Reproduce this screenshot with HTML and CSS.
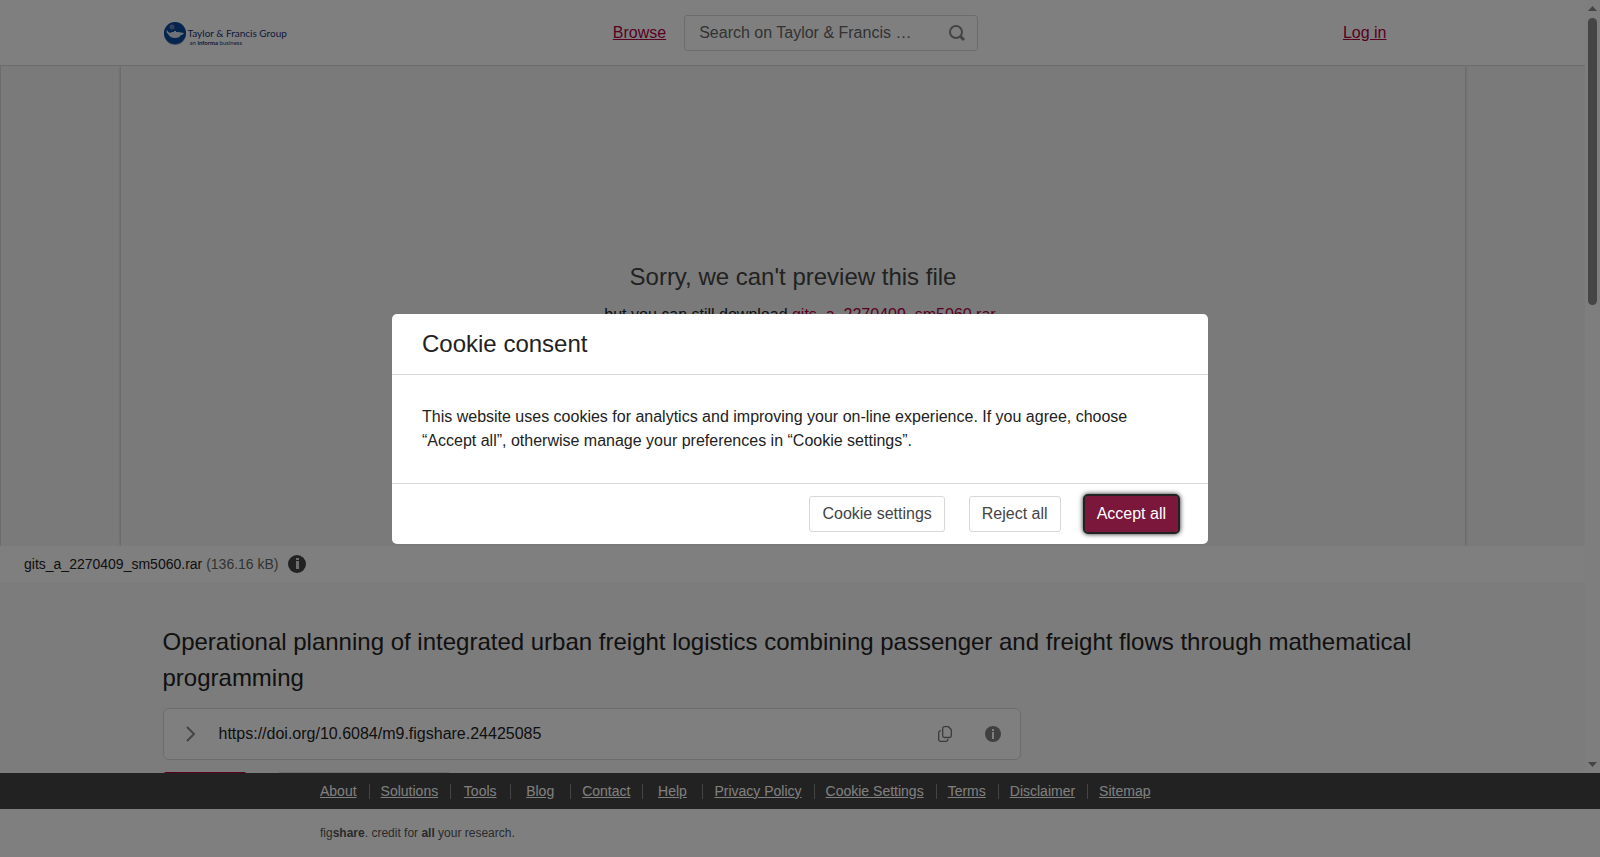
FILE: index.html
```html
<!DOCTYPE html>
<html lang="en">
<head>
  <meta charset="UTF-8">
  <meta name="viewport" content="width=device-width, initial-scale=1.0">
  <title>Operational planning of integrated urban freight logistics</title>
  <link rel="stylesheet" href="styles.css">
</head>
<body>
  <div class="viewport">
    <div class="page">
      <header class="site-header">
        <div class="container header-row">
          <a class="logo" href="#">
            <svg width="24" height="24" viewBox="0 0 24 24" aria-hidden="true">
              <circle cx="12" cy="12" r="11" fill="#8d9cc4"/>
              <circle cx="12" cy="11" r="11" fill="#0a4a9c"/>
              <circle cx="9" cy="5" r="2.500" fill="#6f7db5"/>
              <path d="M4 8c-1 2 0 3 1 4 2 3 4 4 7 4s5-1 6-3c2 0 2-1 3-2-2 0-4-1-6-1h-2V9h-2v1c-2 0-3 0-4 1-1-1-2-1-3-3z" fill="#dfe6f2"/>
            </svg>
            <span class="logo-text">
              <span class="logo-name">Taylor &amp; Francis Group</span>
              <span class="logo-sub">an <b>informa</b> business</span>
            </span>
          </a>
          <div class="header-mid">
            <a href="#">Browse</a>
            <form class="search">
              <input type="text" aria-label="Search" placeholder="Search on Taylor &amp; Francis …">
              <button type="button" aria-label="Submit search">
                <svg width="18" height="18" viewBox="0 0 18 18" fill="none" stroke="#888">
                  <circle cx="8" cy="8" r="6" stroke-width="2"/>
                  <path d="M12 12l4 4" stroke-width="3"/>
                </svg>
              </button>
            </form>
          </div>
          <div class="header-end"><a href="#">Log in</a></div>
        </div>
      </header>

      <section class="preview">
        <div class="preview-frame">
          <h2>Sorry, we can't preview this file</h2>
          <p>but you can still download <a href="#">gits_a_2270409_sm5060.rar</a></p>
        </div>
      </section>

      <div class="file-bar">
        <span>gits_a_2270409_sm5060.rar <span class="size">(136.16 kB)</span></span>
        <button class="icon-button" type="button" aria-label="File information">
          <svg width="18" height="18" viewBox="0 0 18 18">
            <circle cx="9" cy="9" r="9" fill="#444"/>
            <path d="M8 3h3v2H8zM8 6h3v8H8z" fill="#ddd"/>
          </svg>
        </button>
      </div>

      <main class="container item">
        <h1>Operational planning of integrated urban freight logistics combining passenger and freight flows through mathematical programming</h1>
        <div class="doi">
          <button class="icon-button" type="button" aria-label="Expand citation">
            <svg width="10" height="16" viewBox="0 0 10 16" fill="none" stroke="#8a8a8a" stroke-width="2">
              <path d="M1 1l7 7-7 7"/>
            </svg>
          </button>
          <span class="doi-text">https://doi.org/10.6084/m9.figshare.24425085</span>
          <button class="icon-button" type="button" aria-label="Copy DOI">
            <svg width="14" height="16" viewBox="0 0 14 16" fill="none" stroke="#777" stroke-width="1.300">
              <path d="M6.500.7h4l2.800 3v6q0 1.800-1.800 1.800h-5q-1.800 0-1.800-1.800v-7.200q0-1.800 1.800-1.800z"/>
              <path d="M3 4.700Q.7 4.700.7 6.500v7q0 1.800 1.800 1.800h5.500q1.800 0 1.800-2.300"/>
            </svg>
          </button>
          <button class="icon-button" type="button" aria-label="DOI information">
            <svg width="16" height="16" viewBox="0 0 16 16">
              <circle cx="8" cy="8" r="8" fill="#808080"/>
              <path d="M7 3h2v2H7zM7 6h2v7H7z" fill="#fff"/>
            </svg>
          </button>
        </div>
        <div class="actions">
          <button class="btn btn-cite" type="button" aria-label="Cite"></button>
          <button class="btn btn-download" type="button" aria-label="Download"></button>
        </div>
      </main>
    </div>

    <div class="scrollbar" aria-hidden="true">
      <svg width="9" height="5" viewBox="0 0 9 5"><path d="M0 5l4.500-5L9 5z" fill="#8a8a8a"/></svg>
      <div class="track"><div class="thumb"></div></div>
      <svg width="9" height="5" viewBox="0 0 9 5"><path d="M0 0l4.500 5L9 0z" fill="#8a8a8a"/></svg>
    </div>
  </div>

  <footer>
    <nav class="footer-nav">
      <ul>
        <li><a href="#">About</a></li>
        <li><a href="#">Solutions</a></li>
        <li><a href="#">Tools</a></li>
        <li><a href="#">Blog</a></li>
        <li><a href="#">Contact</a></li>
        <li><a href="#">Help</a></li>
        <li><a href="#">Privacy Policy</a></li>
        <li><a href="#">Cookie Settings</a></li>
        <li><a href="#">Terms</a></li>
        <li><a href="#">Disclaimer</a></li>
        <li><a href="#">Sitemap</a></li>
      </ul>
    </nav>
    <p class="tagline">fig<b>share</b>. credit for <b>all</b> your research.</p>
  </footer>

  <div class="overlay">
    <div class="modal" role="dialog" aria-labelledby="consent-title">
      <h2 id="consent-title">Cookie consent</h2>
      <p>This website uses cookies for analytics and improving your on-line experience. If you agree, choose “Accept all”, otherwise manage your preferences in “Cookie settings”.</p>
      <div class="modal-buttons">
        <button class="btn" type="button">Cookie settings</button>
        <button class="btn" type="button">Reject all</button>
        <button class="btn btn-accept" type="button">Accept all</button>
      </div>
    </div>
  </div>
</body>
</html>
```
FILE: styles.css
```css
* {
  box-sizing: border-box;
}
body {
  margin: 0;
  height: 100vh;
  display: flex;
  flex-direction: column;
  overflow: hidden;
  background: #fff;
  color: #222;
  font-family: "Liberation Sans", Arial, sans-serif;
  font-size: 16px;
  line-height: 24px;
}
h1, h2, p, ul {
  margin: 0;
  font-weight: normal;
}
h1, h2 {
  font-size: 24px;
  line-height: 36px;
}
a {
  color: #b10043;
}
svg {
  display: block;
}
button, input {
  font: inherit;
}
.viewport {
  flex: 1;
  min-height: 0;
  display: flex;
}
.page {
  flex: 1;
  overflow: hidden;
  background: #f8f8f8;
}
.container {
  max-width: 1260px;
  margin: 0 auto;
}

/* header */
.site-header {
  background: #fff;
  border-bottom: 1px solid #d8d8d8;
}
.header-row {
  display: grid;
  grid-template-columns: 1fr auto 1fr;
  align-items: center;
  height: 65px;
}
.logo {
  display: flex;
  gap: 1px;
  padding-top: 3px;
  color: #1c3478;
  font-family: Lato, sans-serif;
  text-decoration: none;
}
.logo-text {
  display: flex;
  flex-direction: column;
  padding-top: 5px;
}
.logo-name {
  font-size: 10px;
  line-height: 12px;
}
.logo-sub {
  padding-left: 2px;
  font-size: 6px;
  line-height: 8px;
}
.header-mid {
  display: flex;
  align-items: center;
  gap: 18px;
  margin-left: 6px;
}
.search {
  display: flex;
  align-items: center;
  width: 294px;
  height: 36px;
  padding: 0 11px 0 14px;
  border: 1px solid #d8d8d8;
  border-radius: 3px;
}
.search input {
  flex: 1;
  min-width: 0;
  padding: 0;
  border: 0;
  outline: 0;
  background: none;
}
.search input::placeholder {
  color: #666;
}
.search button, .icon-button {
  padding: 0;
  border: 0;
  background: none;
  cursor: pointer;
}
.header-end {
  padding-right: 36px;
  text-align: right;
}

/* file preview */
.preview {
  background: #f4f4f4;
  border-left: 1px solid #d8d8d8;
}
.preview-frame {
  width: calc(85% - 2px);
  height: 480px;
  margin: 0 auto;
  display: flex;
  flex-direction: column;
  justify-content: center;
  align-items: center;
  padding-bottom: 26px;
  box-shadow: 0 0 3px rgba(0, 0, 0, 0.3);
  clip-path: inset(0 -4px);
}
.preview-frame h2 {
  color: #444;
  margin-bottom: 8px;
}
.preview-frame p {
  padding-left: 14px;
}
.preview-frame a {
  text-decoration: none;
}
.file-bar {
  display: flex;
  align-items: center;
  gap: 9px;
  height: 36px;
  padding: 0 24px;
  background: #fff;
  font-size: 14px;
}
.size {
  color: #666;
}

/* item details */
.item {
  padding-top: 42px;
}
.doi {
  display: flex;
  align-items: center;
  width: 858px;
  max-width: 100%;
  height: 52px;
  margin: 12px 0;
  padding: 0 19px 0 22px;
  background: #fff;
  border: 1px solid #d8d8d8;
  border-radius: 6px;
}
.doi-text {
  flex: 1;
  margin-left: 23px;
}
.doi .icon-button + .icon-button {
  margin-left: 33px;
}
.actions {
  display: flex;
  gap: 30px;
}
.btn {
  height: 36px;
  padding: 0 12px;
  background: #fff;
  border: 1px solid #d8d8d8;
  border-radius: 3px;
  color: #444;
  cursor: pointer;
}
.btn-cite {
  width: 84px;
  background: #b10043;
  border-color: #b10043;
}
.btn-download {
  width: 174px;
}

/* scrollbar column */
.scrollbar {
  width: 15px;
  padding: 6px 3px;
  display: flex;
  flex-direction: column;
  align-items: center;
  gap: 7px;
  background: #fcfcfc;
}
.track {
  flex: 1;
  width: 9px;
}
.thumb {
  height: 39%;
  border-radius: 5px;
  background: #8a8a8a;
}

/* footer */
.footer-nav {
  display: flex;
  height: 36px;
  align-items: center;
  background: #444;
}
.footer-nav ul {
  display: flex;
  width: 100%;
  max-width: 982px;
  margin: 0 auto;
  padding: 0;
  list-style: none;
  font-size: 14px;
  line-height: 15px;
}
.footer-nav li {
  min-width: 60px;
  padding: 0 12px 0 11px;
  border-right: 1px solid #888;
  text-align: center;
  white-space: nowrap;
}
.footer-nav li:last-child {
  border: 0;
}
.footer-nav a {
  color: #fff;
}
.tagline {
  max-width: 960px;
  margin: 0 auto;
  padding: 12px 0;
  color: #555;
  font-size: 12px;
}

/* cookie dialog */
.overlay {
  position: fixed;
  inset: 0;
  display: flex;
  align-items: center;
  justify-content: center;
  background: rgba(0, 0, 0, 0.5);
}
.modal {
  width: 816px;
  background: #fff;
  border-radius: 5px;
}
.modal h2 {
  padding: 12px 30px;
  border-bottom: 1px solid #d8d8d8;
}
.modal p {
  padding: 30px;
}
.modal-buttons {
  display: flex;
  justify-content: flex-end;
  gap: 24px;
  padding: 12px 30px;
  border-top: 1px solid #d8d8d8;
}
.btn-accept {
  padding: 0 11px;
  background: #7a173b;
  border-color: #7a173b;
  color: #fff;
  outline: 2px solid #222;
  box-shadow: 0 0 5px 2px #222;
}
```
